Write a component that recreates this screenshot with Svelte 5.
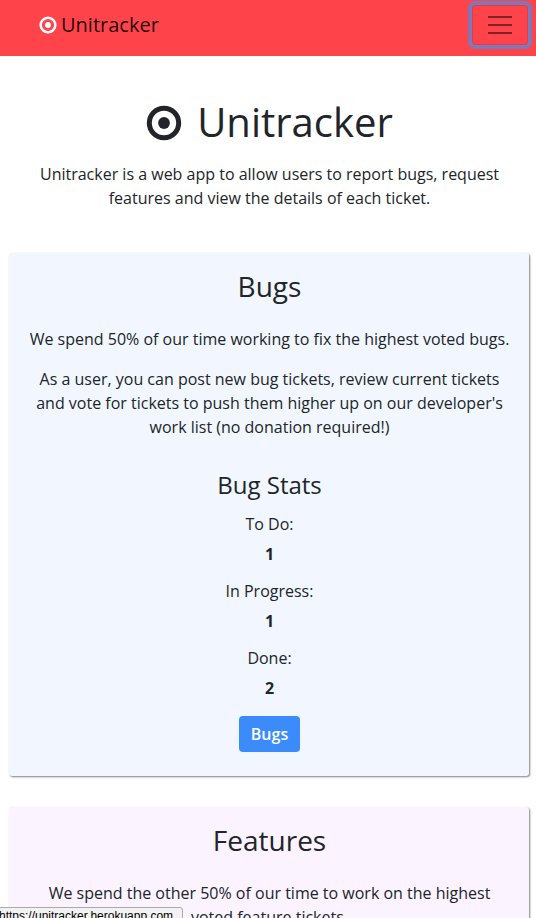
<script>
  const stats = [
    { label: 'To Do:', value: 1 },
    { label: 'In Progress:', value: 1 },
    { label: 'Done:', value: 2 }
  ];
</script>

{#snippet target()}
  <svg class="target" viewBox="0 0 36 36" aria-hidden="true">
    <circle cx="18" cy="18" r="14.7" fill="none" stroke="currentColor" stroke-width="5" />
    <circle cx="18" cy="18" r="5.9" fill="currentColor" />
  </svg>
{/snippet}

<div class="page">
  <nav>
    <a class="brand" href="#home">{@render target()}<span>Unitracker</span></a>
    <button class="toggler" aria-label="Toggle navigation">
      <svg viewBox="0 0 30 30" width="30" height="30">
        <path d="M3 7h24M3 15h24M3 23h24" stroke="#000" stroke-opacity=".5" stroke-width="2" />
      </svg>
    </button>
  </nav>

  <header>
    <h1>{@render target()}<span>Unitracker</span></h1>
    <p>Unitracker is a web app to allow users to report bugs, request<br />features and view the details of each ticket.</p>
  </header>

  <section class="card bugs">
    <h2>Bugs</h2>
    <p>We spend 50% of our time working to fix the highest voted bugs.</p>
    <p>As a user, you can post new bug tickets, review current tickets<br />and vote for tickets to push them higher up on our developer's<br />work list (no donation required!)</p>
    <h3>Bug Stats</h3>
    <dl>
      {#each stats as stat}
        <div class="stat">
          <dt>{stat.label}</dt>
          <dd>{stat.value}</dd>
        </div>
      {/each}
    </dl>
    <a class="btn" href="#bugs">Bugs</a>
  </section>

  <section class="card features">
    <h2>Features</h2>
    <p>We spend the other 50% of our time to work on the highest<br />voted feature tickets.</p>
  </section>

  <div class="status">https://unitracker.herokuapp.com</div>
</div>

<style>
  :global(body) {
    margin: 0;
    background: #fff;
  }
  .page {
    position: relative;
    width: 536px;
    height: 918px;
    overflow: hidden;
    box-sizing: border-box;
    font: 16px/24px "Open Sans", sans-serif;
    color: #212529;
    text-align: center;
  }
  h1, h2, h3, p, dl, dd {
    margin: 0;
    font-weight: 400;
  }
  a {
    text-decoration: none;
  }
  nav {
    display: flex;
    justify-content: space-between;
    align-items: flex-start;
    height: 56px;
    box-sizing: border-box;
    padding: 5px 8px 0 38.5px;
    background: #ff434b;
  }
  .brand {
    display: flex;
    align-items: center;
    height: 40px;
    gap: 4.5px;
    font-size: 20px;
    color: rgba(0, 0, 0, 0.9);
  }
  .brand .target {
    width: 18px;
    height: 18px;
    color: #fff;
  }
  .toggler {
    display: flex;
    align-items: center;
    justify-content: center;
    width: 56px;
    height: 40px;
    padding: 0;
    border: 1px solid rgba(0, 0, 0, 0.1);
    border-radius: 4px;
    background: none;
    outline: none;
    box-shadow: 0 0 1px 3.3px #7f78b9;
  }
  header {
    padding: 42px 0 0 3px;
    height: 155px;
  }
  h1 {
    display: flex;
    justify-content: center;
    align-items: center;
    gap: 15px;
    height: 48px;
    margin-bottom: 16px;
    font-size: 40px;
    line-height: 48px;
  }
  h1 .target {
    width: 36px;
    height: 36px;
    margin-top: 1px;
  }
  .card {
    width: 520px;
    margin: 0 0 31px 9px;
    padding: 16px 0 24px 1px;
    box-sizing: border-box;
    border-radius: 3px;
    box-shadow: 1px 1px 2px rgba(0, 0, 0, 0.5);
  }
  .bugs {
    height: 523px;
    background: #f2f7ff;
  }
  .features {
    height: 300px;
    background: #fbf3ff;
  }
  h2 {
    margin-bottom: 24px;
    font-size: 28px;
    line-height: 34px;
  }
  .card p {
    margin-bottom: 16px;
  }
  h3 {
    padding-top: 15px;
    margin-bottom: 13px;
    font-size: 24px;
    line-height: 29px;
  }
  .stat {
    margin-bottom: 13px;
  }
  dd {
    margin-top: 6px;
    font-weight: 700;
  }
  .btn {
    display: inline-block;
    margin-top: 3px;
    padding: 6px 11.7px;
    border-radius: 4px;
    background: #3b8cfa;
    color: #fff;
    font-weight: 600;
  }
  .status {
    position: absolute;
    left: -1px;
    bottom: -4px;
    width: 184px;
    height: 15px;
    box-sizing: border-box;
    border: 1px solid #aaa;
    border-radius: 0 3px 0 0;
    background: #f2f2f2;
    font: 12px/16px "Liberation Sans", sans-serif;
    color: #000;
    text-align: left;
    text-indent: -1px;
    white-space: nowrap;
  }
</style>
